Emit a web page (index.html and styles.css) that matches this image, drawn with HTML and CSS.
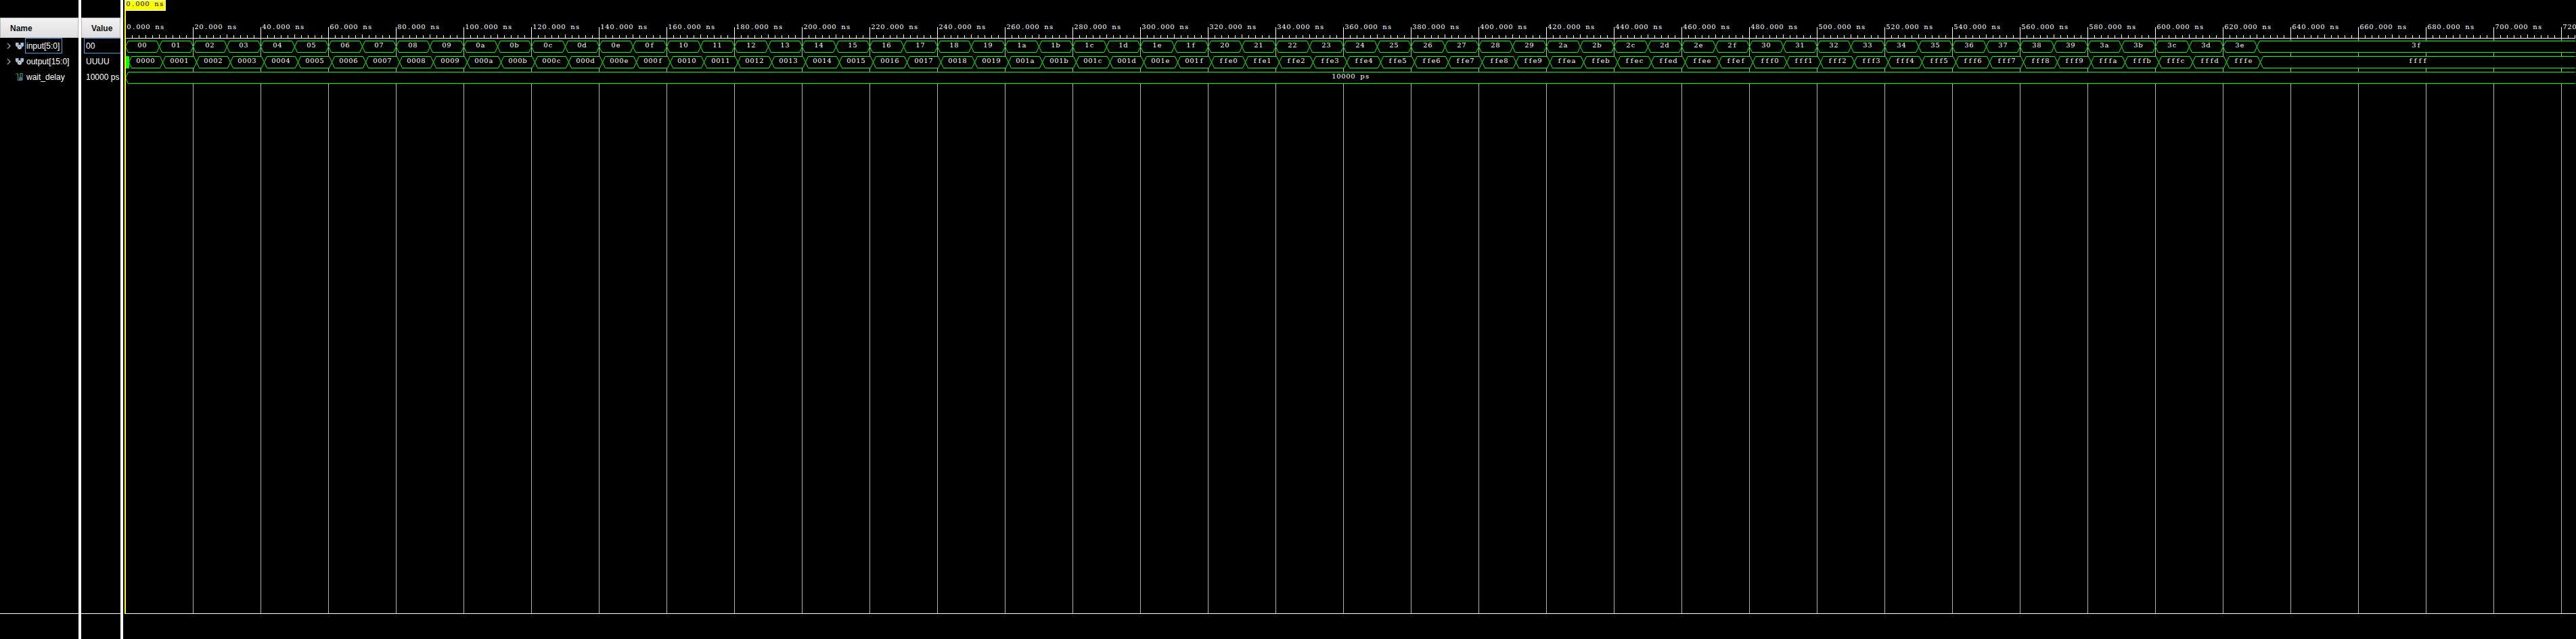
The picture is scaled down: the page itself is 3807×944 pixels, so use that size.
FILE: index.html
```html
<!DOCTYPE html>
<html lang="en">
<head>
<meta charset="utf-8">
<title>Waveform</title>
<link rel="stylesheet" href="styles.css">
</head>
<body>
<svg class="defs" width="0" height="0" aria-hidden="true">
  <symbol id="bus" viewBox="0 0 12 12">
    <path d="M0 1H4.6V5L3 7H1.5L0 5.5Z M7.4 1H12V5.5L10.5 7H9L7.4 5Z" fill="#9cc3de"/>
    <circle cx="6" cy="7.5" r="3.2" fill="#d2d2d2" stroke="#858585" stroke-width=".8"/>
    <circle cx="6" cy="7.5" r="1.1" fill="#777"/>
  </symbol>
  <symbol id="signal" viewBox="0 0 12 12">
    <path d="M0 1H3.5V10.5H7V.5H10V6" fill="none" stroke="#2f9e4d" stroke-width="1.2"/>
    <circle cx="7.8" cy="8.5" r="2.7" fill="#6f82a0" stroke="#3d5275"/>
    <circle cx="7.8" cy="8.5" r=".9" fill="#2b3a58"/>
  </symbol>
  <symbol id="chevron" viewBox="0 0 6 10">
    <path d="M1 1L5 5L1 9" fill="none" stroke="#a0a0a0" stroke-width="1.4"/>
  </symbol>
</svg>
<main class="viewer">
  <section class="column names">
    <h2 class="head">Name</h2>
    <div class="row"><svg class="chevron"><use href="#chevron"/></svg><svg class="icon"><use href="#bus"/></svg><span class="label selected">input[5:0]</span></div>
    <div class="row"><svg class="chevron"><use href="#chevron"/></svg><svg class="icon"><use href="#bus"/></svg><span class="label">output[15:0]</span></div>
    <div class="row"><span class="chevron"></span><svg class="icon"><use href="#signal"/></svg><span class="label">wait_delay</span></div>
    <div class="footer"></div>
  </section>
  <div class="splitter"></div>
  <section class="column values">
    <h2 class="head">Value</h2>
    <div class="row chosen">00</div>
    <div class="row">UUUU</div>
    <div class="row">10000 ps</div>
    <div class="footer"></div>
  </section>
  <div class="splitter"></div>
  <section class="waves">
    <svg id="wave" class="wave" width="3625" height="944" viewBox="182 0 3625 944"></svg>
  </section>
</main>
<script src="wave.js"></script>
</body>
</html>
```
FILE: styles.css
```css
* { box-sizing: border-box; }
body { margin: 0; background: #000; overflow: hidden; }
.defs { position: absolute; }
.viewer {
  display: flex;
  width: 3807px;
  height: 944px;
  color: #fff;
  font: 12px/23px "Liberation Sans", Arial, sans-serif;
}
.column { display: flex; flex-direction: column; flex: none; padding-top: 26px; overflow: hidden; }
.names { width: 116px; }
.values { width: 58px; }
.splitter { width: 4px; flex: none; background: #fff; }
.head {
  height: 30px;
  margin: 0;
  padding-left: 14px;
  border: 1px solid #b4b4b4;
  background: linear-gradient(#f2f2f2, #dfdfe1);
  color: #111;
  font-size: 12px;
  font-weight: bold;
  line-height: 30px;
  flex: none;
}
.row { display: flex; align-items: center; height: 23px; white-space: nowrap; flex: none; }
.names .row { padding-left: 10px; }
.values .row { padding-left: 7px; padding-top: 1px; }
.values .chosen { border: 1px solid #4a9ade; border-right: 0; margin-left: 4px; padding-left: 2px; }
.chevron { width: 6px; height: 10px; margin-right: 7px; flex: none; }
.icon { width: 12px; height: 12px; margin-right: 2px; flex: none; }
.label { height: 23px; padding: 0 3px 0 2px; line-height: 24px; }
.selected { border: 1px solid #4a9ade; padding: 0 3px 0 1px; line-height: 22px; }
.footer { height: 38px; margin-top: auto; border-top: 1px solid #fff; flex: none; }
.waves { flex: none; width: 3625px; }
.wave { display: block; }
.text { font: 10px "DejaVu Serif", serif; text-anchor: middle; fill: #fff; white-space: pre; }
.text.cursor-text { fill: #000; }
.bus { fill: #000; stroke: #0f0; stroke-width: 1; }
```
FILE: wave.js
```javascript
const ORIGIN = 185, PX_PER_NS = 5, END = 3806, CELL = 7;
const out = [];
const rect = (x, y, w, h, fill) => out.push(`<rect x="${x}" y="${y}" width="${w}" height="${h}" fill="${fill}"/>`);

// Each character is centred in a cell of fixed width
function text(x, y, s, cls = "") {
  const xs = [...s].map((_, i) => x + (i + .5) * CELL).join(" ");
  out.push(`<text class="text ${cls}" x="${xs}" y="${y}">${s}</text>`);
}

// Ruler and vertical grid
for (let ns = 0; ns <= 724; ns += 2) {
  const x = ORIGIN + ns * PX_PER_NS;
  if (ns % 20 === 0) {
    if (ns) { rect(x, 56, 1, 850, "#b4b4b4"); rect(x, 40, 1, 17, "#fff"); }
    // The last label only has room for its whole part
    text(x + 2, 43, ns === 720 ? "720" : `${ns}.000 ns`);
  } else {
    rect(x, ns % 10 === 0 ? 51 : 52, 1, ns % 10 === 0 ? 5 : 4, "#fff");
  }
}
rect(186, 56, END - 186, 1, "#fff");
rect(186, 906, 3621, 1, "#fff");

// One bus segment with slanted ends
function segment(x0, x1, top, label, open) {
  const a = x0 + .5, b = x1 + .5, t = top + .5, m = t + 8.5, e = t + 17;
  const d = open
    ? `M${END} ${t}H${a + 4}L${a} ${m}L${a + 4} ${e}H${END}`
    : `M${a} ${m}L${a + 4} ${t}H${b - 4}L${b} ${m}L${b - 4} ${e}H${a + 4}Z`;
  out.push(`<path class="bus" d="${d}"/>`);
  text(Math.round((x0 + x1) / 2 - label.length * CELL / 2), top + 10, label);
}
const hex = (n, w) => n.toString(16).padStart(w, "0");
for (let i = 0; i < 64; i++) {
  const x = ORIGIN + i * 50, last = i === 63;
  segment(x, last ? END : x + 50, 60, hex(i, 2), last);
  segment(x + 5, last ? END : x + 55, 83, hex(i < 32 ? i : 0xffc0 + i, 4), last);
}
rect(186, 83, 5, 18, "#0f0");
segment(ORIGIN, END, 106, "10000 ps", true);

// Time cursor
rect(184, 0, 2, 907, "#ff0");
rect(184, 0, 61, 16, "#fff");
rect(185, 1, 59, 14, "#ff0");
text(186, 9, "0.000 ns", "cursor-text");
document.getElementById("wave").innerHTML = out.join("");
```
